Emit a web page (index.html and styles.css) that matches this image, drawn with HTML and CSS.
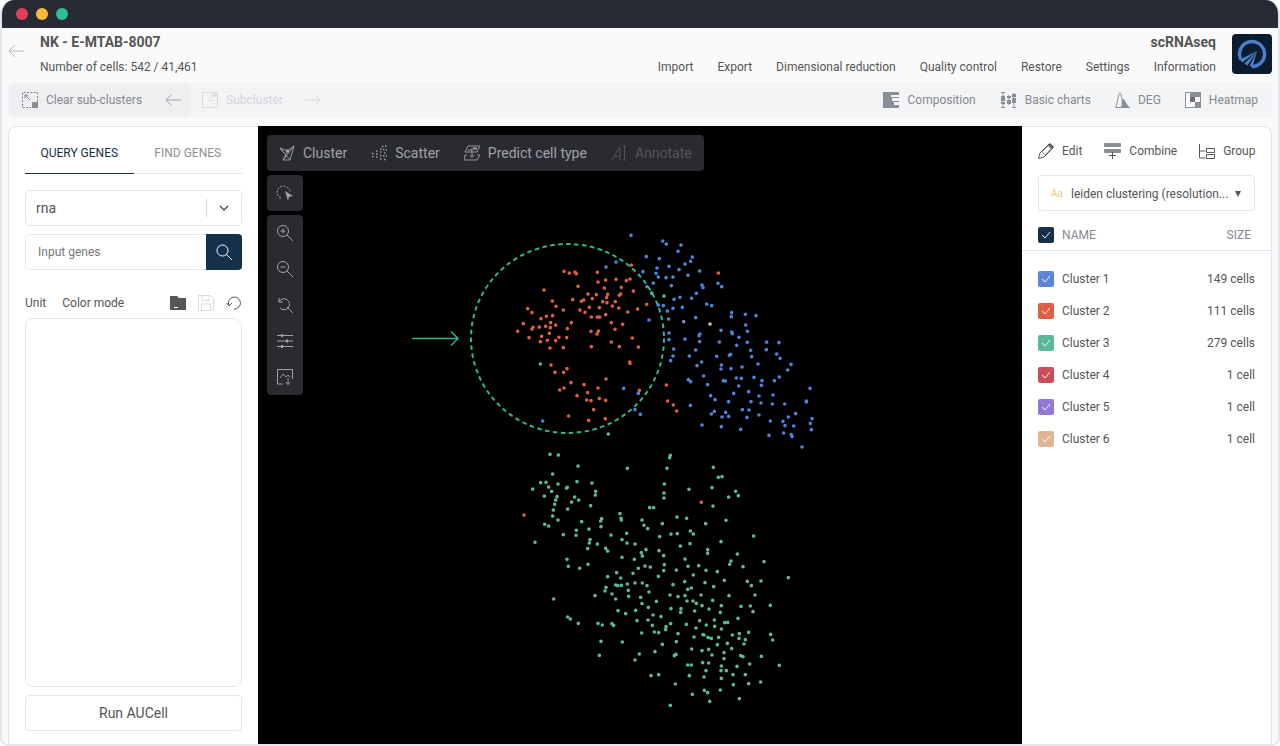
FILE: index.html
```html
<!DOCTYPE html>
<html>
<head>
    <title>NK - E-MTAB-8007</title>
    <meta charset="UTF-8">
    <link rel="stylesheet" href="styles.css">
</head>
<body>
<div class="window">
    <div class="titlebar">
        <span class="light red"></span>
        <span class="light yellow"></span>
        <span class="light green"></span>
    </div>

    <div class="header">
        <svg class="back" width="16" height="14" viewBox="0 0 16 14"><path d="M15.5 7H1M7 1 1 7l6 6" fill="none" stroke="#b4b7bc" stroke-width="1"/></svg>
        <div class="title-block">
            <div class="title">NK - E-MTAB-8007</div>
            <div class="subtitle">Number of cells: 542 / 41,461</div>
        </div>
        <div class="header-right">
            <div class="app-name">scRNAseq</div>
            <div class="nav">
                <span>Import</span>
                <span>Export</span>
                <span>Dimensional reduction</span>
                <span>Quality control</span>
                <span>Restore</span>
                <span>Settings</span>
                <span>Information</span>
            </div>
        </div>
        <div class="logo">
            <svg width="40" height="40" viewBox="0 0 40 40">
                <path d="M8.900 25.700A12.500 12.500 0 1 1 20 32.500" fill="none" stroke="#4c80cb" stroke-width="3.400"/>
                <path d="M25 17 8 25.500 10.500 28.500ZM25 17 12.500 29.500 15.500 31.500ZM25 17 17.500 32 20.500 33Z" fill="#4c80cb"/>
            </svg>
        </div>
    </div>

    <div class="toolbar">
        <div class="tool-group">
            <div class="tool tool-on">
                <svg width="16" height="16" viewBox="0 0 16 16"><path d="M.5 10V.5H15.500V10M.5 12v3.500H9" fill="none" stroke="#7d8087" stroke-dasharray="2 1.500"/><rect x="10" y="10" width="6" height="6" fill="#8a8d94"/><path d="M8 8 3 3M3 6V3h3" fill="none" stroke="#7d8087"/></svg>
                <span>Clear sub-clusters</span>
            </div>
            <div class="tool-arrow tool-on">
                <svg width="16" height="12" viewBox="0 0 16 12"><path d="M16 6H1M6.500 .5 1 6l5.500 5.500" fill="none" stroke="#a0a3a9"/></svg>
            </div>
            <div class="tool tool-off sub">
                <svg width="16" height="16" viewBox="0 0 16 16"><path d="M.5.500h15v15H.5z" fill="none" stroke="#d8dadd"/><path d="M10 0h6v5h-6zM6 5h4v1H6zM6 8h7v1H6zM10 11h3v1h-3z" fill="#dfe0e3"/></svg>
                <span>Subcluster</span>
            </div>
            <svg class="next" width="16" height="12" viewBox="0 0 16 12"><path d="M0 6h15M9.500 .5 15 6l-5.500 5.500" fill="none" stroke="#d8dadd"/></svg>
        </div>
        <div class="tool-group right">
            <div class="tool">
                <svg width="16" height="16" viewBox="0 0 16 16"><path d="M0 0h16v3H8v2h8v1H9v3h7v1h-5v3h5v3H0z" fill="#8a8e96"/></svg>
                <span>Composition</span>
            </div>
            <div class="tool">
                <svg width="17" height="16" viewBox="0 0 17 16"><path d="M3 0v16M9 3v10M14 1v15M1 .5h4M1 15.500h4M12 15.500h4" stroke="#8a8e96" fill="none"/><path d="M1 4h4v5H1zM1 10h4v2H1zM7 4h4v2H7zM7 8h4v4H7zM12 2h4v3h-4zM12 6h4v5h-4z" fill="#8a8e96"/></svg>
                <span>Basic charts</span>
            </div>
            <div class="tool">
                <svg width="15" height="16" viewBox="0 0 15 16"><path d="M.5 16C3 11 3 1 5 1s2 11 3 13" fill="none" stroke="#8a8e96"/><path d="M7 9c1-3 2-2 3 0 1 2 3 5 5 7H6z" fill="#8a8e96"/><path d="M0 15.500h15" stroke="#8a8e96"/></svg>
                <span>DEG</span>
            </div>
            <div class="tool">
                <svg width="16" height="16" viewBox="0 0 16 16"><path d="M.5.500h15v15H.5z" fill="#fff" stroke="#8a8e96"/><path d="M5 0h11v5H5zM5 5h5v5H5zM10 10h6v6h-6z" fill="#8a8e96"/><path d="M5 5h5v5H5z" fill="#6f7279"/></svg>
                <span>Heatmap</span>
            </div>
        </div>
    </div>

    <div class="main">
        <div class="panel panel-left">
            <div class="tabs">
                <div class="tab tab-active">QUERY GENES</div>
                <div class="tab">FIND GENES</div>
            </div>
            <div class="select-box">
                <span class="select-value">rna</span>
                <span class="select-sep"></span>
                <svg width="10" height="6" viewBox="0 0 10 6"><path d="M1 1l4 4 4-4" fill="none" stroke="#555" stroke-width="1.500"/></svg>
            </div>
            <div class="search-box">
                <span class="search-hint">Input genes</span>
                <div class="search-btn">
                    <svg width="16" height="16" viewBox="0 0 16 16"><circle cx="6.500" cy="6.500" r="5.500" fill="none" stroke="#fff"/><path d="M10.500 10.500 16 16" stroke="#fff"/></svg>
                </div>
            </div>
            <div class="unit-row">
                <span>Unit</span>
                <span class="color-mode">Color mode</span>
                <div class="unit-icons">
                    <svg width="16" height="14" viewBox="0 0 16 14"><path d="M0 0h7l2 2h7v12H0z" fill="#55565a"/><path d="M4 11h4v1H4z" fill="#fff"/></svg>
                    <svg width="16" height="16" viewBox="0 0 16 16"><path d="M.5.500h12l3 3v12H.5z" fill="none" stroke="#d9dbde"/><path d="M4 .5v5h7v-5M3.500 15.500V9h9v6.500" fill="none" stroke="#d9dbde"/></svg>
                    <svg width="15" height="14" viewBox="0 0 15 14"><path d="M3 9.500A6 6 0 1 1 8 13M.5 7 3 10l3-3" fill="none" stroke="#55565a"/></svg>
                </div>
            </div>
            <div class="gene-list"></div>
            <div class="run-btn">Run AUCell</div>
        </div>

        <div class="plot">
            <svg class="scatter" width="764" height="618" viewBox="258 126 764 618">
                <g transform="translate(470 230) scale(.33333)" fill="none" stroke-linecap="round" stroke-width="11">
                    <path stroke="#4f82d8" d="M483 16h0M578 33h0M589 42h0M633 45h0M624 64h0M667 81h0M662 94h0M645 102h0M529 80h0M568 86h0M597 109h0M561 114h0M627 119h0M689 123h0M558 130h0M654 136h0M565 141h0M588 143h0M609 141h0M550 159h0M604 167h0M696 165h0M699 173h0M744 160h0M755 170h0M679 190h0M665 205h0M630 202h0M612 208h0M710 222h0M725 227h0M637 232h0M609 235h0M592 243h0M580 227h0M565 225h0M596 267h0M537 270h0M677 263h0M785 248h0M784 260h0M826 253h0M858 257h0M827 285h0M832 304h0M753 301h0M785 306h0M787 311h0M807 322h0M832 337h0M748 336h0M800 346h0M842 361h0M845 380h0M890 336h0M927 338h0M889 359h0M920 372h0M930 385h0M864 402h0M963 403h0M953 420h0M597 309h0M597 329h0M645 327h0M690 312h0M687 317h0M689 335h0M611 357h0M677 360h0M609 378h0M658 378h0M602 392h0M740 379h0M782 373h0M778 376h0M695 396h0M681 407h0M754 405h0M753 417h0M783 416h0M816 411h0M701 438h0M655 449h0M662 455h0M713 464h0M799 444h0M814 445h0M760 452h0M766 453h0M852 442h0M876 452h0M874 466h0M806 468h0M913 452h0M928 441h0M836 485h0M791 490h0M722 497h0M735 509h0M867 498h0M909 495h0M776 515h0M843 515h0M873 519h0M907 522h0M944 522h0M661 526h0M1020 475h0M1009 513h0M1009 516h0M817 539h0M837 540h0M767 547h0M733 544h0M724 552h0M756 561h0M776 559h0M831 562h0M867 555h0M955 561h0M977 551h0M1026 566h0M901 573h0M939 574h0M1021 580h0M971 588h0M945 587h0M1024 599h0M696 585h0M754 590h0M812 598h0M897 616h0M941 609h0M964 614h0M966 620h0M996 651h0M408 111h0M438 96h0M519 125h0M531 170h0M461 475h0M505 490h0M495 539h0M511 553h0M218 573h0"/>
                    <path stroke="#dd5f44" d="M282 124h0M298 129h0M315 126h0M319 131h0M382 127h0M484 105h0M745 129h0M384 156h0M407 150h0M438 148h0M469 152h0M480 147h0M454 172h0M403 174h0M490 183h0M222 180h0M324 169h0M354 192h0M379 194h0M413 193h0M452 192h0M448 196h0M410 203h0M367 206h0M308 209h0M341 210h0M334 214h0M247 213h0M398 215h0M411 218h0M436 215h0M427 228h0M446 234h0M530 223h0M503 237h0M473 246h0M388 233h0M358 232h0M330 240h0M345 247h0M258 229h0M280 240h0M173 236h0M186 248h0M248 257h0M229 259h0M213 266h0M364 261h0M382 261h0M389 261h0M407 254h0M304 278h0M242 278h0M160 281h0M257 285h0M227 289h0M241 293h0M208 291h0M189 292h0M186 297h0M143 304h0M292 296h0M424 278h0M458 283h0M435 298h0M363 304h0M385 303h0M381 312h0M238 310h0M215 319h0M177 323h0M232 331h0M211 335h0M267 322h0M257 332h0M290 323h0M487 324h0M424 336h0M505 351h0M448 350h0M364 350h0M240 354h0M280 353h0M479 396h0M480 400h0M243 405h0M291 416h0M281 427h0M255 427h0M408 447h0M303 458h0M342 464h0M384 474h0M282 474h0M269 480h0M589 465h0M508 481h0M353 488h0M321 497h0M388 505h0M350 510h0M363 512h0M407 511h0M371 539h0M296 558h0M356 571h0M406 566h0M593 513h0M610 525h0M620 543h0"/>
                    <path stroke="#5cb89a" d="M211 402h0M545 189h0M582 198h0M415 612h0"/>
                    <path stroke="#8f79d4" d="M641 275h0"/>
                    <path stroke="#e0b692" d="M720 282h0"/>
                </g>
                <g transform="translate(510 445) scale(.33333)" fill="none" stroke-linecap="round" stroke-width="11">
                    <path stroke="#5cb89a" d="M120 28h0M145 30h0M204 63h0M128 87h0M92 113h0M108 112h0M144 117h0M116 126h0M125 139h0M68 132h0M103 153h0M141 155h0M137 165h0M134 178h0M130 195h0M128 213h0M144 225h0M104 238h0M116 243h0M75 292h0M160 269h0M172 127h0M170 129h0M201 110h0M246 114h0M257 139h0M256 150h0M194 156h0M206 165h0M185 171h0M173 192h0M242 182h0M215 230h0M237 252h0M199 256h0M198 271h0M240 284h0M238 294h0M262 297h0M233 311h0M287 310h0M293 318h0M275 221h0M272 228h0M273 245h0M303 270h0M330 206h0M333 220h0M334 225h0M352 70h0M471 70h0M481 31h0M479 38h0M610 67h0M625 97h0M636 95h0M463 117h0M462 144h0M462 159h0M537 133h0M606 128h0M677 139h0M685 152h0M656 156h0M609 183h0M419 188h0M431 188h0M396 225h0M402 241h0M413 251h0M457 236h0M501 216h0M530 220h0M587 236h0M648 226h0M350 265h0M336 284h0M351 294h0M375 297h0M449 275h0M483 267h0M502 266h0M541 258h0M550 267h0M633 290h0M731 273h0M511 303h0M540 296h0M408 314h0M394 323h0M397 333h0M447 317h0M461 332h0M593 314h0M593 325h0M682 327h0M336 337h0M373 343h0M525 342h0M171 343h0M175 364h0M209 370h0M234 358h0M405 363h0M421 366h0M385 370h0M463 359h0M461 377h0M499 375h0M534 364h0M566 362h0M588 376h0M622 380h0M663 348h0M659 358h0M699 365h0M762 350h0M835 398h0M320 383h0M369 385h0M293 395h0M332 399h0M445 394h0M550 390h0M712 409h0M724 422h0M753 408h0M643 406h0M585 413h0M524 410h0M489 419h0M611 425h0M352 417h0M375 414h0M397 414h0M411 422h0M317 420h0M323 422h0M334 421h0M288 427h0M285 438h0M355 436h0M417 441h0M306 447h0M255 452h0M356 454h0M392 457h0M480 450h0M504 455h0M525 452h0M544 429h0M533 433h0M573 450h0M657 452h0M735 450h0M317 462h0M131 462h0M439 469h0M396 476h0M415 487h0M531 468h0M549 468h0M559 475h0M608 466h0M576 482h0M634 482h0M693 484h0M721 483h0M781 481h0M729 500h0M324 497h0M377 496h0M347 506h0M483 491h0M513 491h0M512 502h0M554 498h0M597 492h0M631 502h0M429 510h0M453 515h0M684 520h0M173 516h0M181 522h0M205 535h0M264 535h0M277 540h0M306 536h0M311 541h0M381 527h0M414 525h0M427 541h0M468 545h0M467 554h0M482 536h0M529 538h0M569 527h0M613 525h0M644 533h0M653 532h0M589 540h0M614 544h0M558 549h0M634 552h0M395 564h0M433 561h0M446 563h0M504 566h0M552 576h0M579 569h0M582 570h0M594 577h0M604 580h0M626 577h0M667 570h0M688 566h0M716 562h0M687 580h0M706 584h0M782 568h0M788 585h0M273 589h0M337 591h0M457 598h0M499 590h0M622 599h0M652 595h0M702 597h0M545 612h0M576 617h0M596 613h0M665 611h0M435 620h0M388 627h0M493 632h0M498 628h0M606 630h0M642 623h0M642 641h0M692 632h0M699 635h0M754 634h0M268 631h0M375 645h0M533 660h0M544 660h0M578 653h0M596 654h0M634 663h0M681 664h0M719 657h0M808 661h0M588 677h0M633 677h0M649 677h0M423 692h0M446 689h0M538 692h0M582 696h0M634 700h0M669 689h0M706 689h0M496 717h0M670 719h0M716 716h0M752 711h0M583 736h0M593 743h0M631 735h0M547 748h0M599 769h0M688 761h0M481 781h0"/>
                    <path stroke="#dd5f44" d="M574 172h0M42 210h0"/>
                </g>
                <ellipse cx="567.500" cy="338.500" rx="96.500" ry="94.500" fill="none" stroke="#2cb794" stroke-width="2" stroke-dasharray="4.500 3.500"/>
                <path d="M412 338.500h46M451 331.500l7 7-7 7" fill="none" stroke="#2cb794" stroke-width="1.500"/>
            </svg>

            <div class="plot-bar">
                <div class="plot-tool">
                    <svg width="16" height="16" viewBox="0 0 16 16"><path d="M1 3 8.500 6 15 1 11 15 4 15 8.500 6M1 3 11 15M4 15 15 1M1 3 5 8" fill="none" stroke="#a0a3a8" stroke-width=".9"/><path d="M7 4.500h3v3H7z" fill="#a0a3a8"/></svg>
                    <span>Cluster</span>
                </div>
                <div class="plot-tool">
                    <svg width="16" height="16" viewBox="0 0 16 16"><path d="M11 1.500h1.500M14 1h1.500M9 4h1.500M12 4.500h1.500M15 5h1M5 6h1.500M9 7h1.500M13 8h1.500M1 8.500h1.500M5 9h1.500M1 11.500h1.500M5 12h1.500M9 10.500h1.500M12 11h1.500M15 11h1M9 14h1.500M13 14.500h1.500" stroke="#a0a3a8" stroke-width="1.600" fill="none"/></svg>
                    <span>Scatter</span>
                </div>
                <div class="plot-tool">
                    <svg width="16" height="16" viewBox="0 0 16 16"><path d="M4 1h12l-3 6H1zM3 10H1l-1 5h13l3-5h-3M8 3v9M5.500 10 8 12.500 10.500 10M4 5h4" fill="none" stroke="#a0a3a8" stroke-width=".9"/><path d="M9 2.500h4v2H9z" fill="#a0a3a8"/></svg>
                    <span>Predict cell type</span>
                </div>
                <div class="plot-tool plot-tool-off">
                    <svg width="16" height="16" viewBox="0 0 16 16"><path d="M1 15 8 3h1v12M3.500 11H9M12 1h3M12 15h3M13.500 1v14" fill="none" stroke="#55565b" stroke-width=".9"/></svg>
                    <span>Annotate</span>
                </div>
            </div>

            <div class="plot-side side-lasso">
                <svg width="18" height="18" viewBox="0 0 18 18"><path d="M5 14C1 13 0 8 2 5s6-4 9-2 3 4 3 5" fill="none" stroke="#a0a3a8" stroke-dasharray="2 1.500"/><path d="M9 7 17 12l-4 1-1 4z" fill="#a0a3a8"/></svg>
            </div>
            <div class="plot-side side-view">
                <svg width="16" height="16" viewBox="0 0 16 16"><circle cx="6" cy="6" r="5.500" fill="none" stroke="#a0a3a8"/><path d="M10 10l6 6M3.500 6h5M6 3.500v5" stroke="#a0a3a8" fill="none"/></svg>
                <svg width="16" height="16" viewBox="0 0 16 16"><circle cx="6" cy="6" r="5.500" fill="none" stroke="#a0a3a8"/><path d="M10 10l6 6M3.500 6h5" stroke="#a0a3a8" fill="none"/></svg>
                <svg width="16" height="16" viewBox="0 0 16 16"><path d="M2 1v4h4M2 5a5.500 5.500 0 1 1 1 6M10 10l6 6" stroke="#a0a3a8" fill="none"/></svg>
                <svg width="16" height="16" viewBox="0 0 16 16"><path d="M0 2.500h16M0 8h16M0 13.500h16" stroke="#a0a3a8" fill="none"/><path d="M4 1h2v3H4zM9 6.500h2v3H9zM4 12h2v3H4z" fill="#a0a3a8"/></svg>
                <svg width="16" height="16" viewBox="0 0 16 16"><path d="M6 15H.5V.5h15V10" fill="none" stroke="#a0a3a8"/><path d="M3 9l3-4 3 3 2-2 2 2M11 9v6.500M8.500 13l2.500 2.500 2.500-2.500" fill="none" stroke="#a0a3a8" stroke-width=".9"/></svg>
            </div>
        </div>

        <div class="panel panel-right">
            <div class="edit-row">
                <div class="edit-tool">
                    <svg width="16" height="16" viewBox="0 0 16 16"><path d="M.5 15.500 2 10 11 1l4 4-9 9z" fill="none" stroke="#55565a"/><path d="M10 2l2-2 4 4-2 2z" fill="#55565a"/><path d="M4 9l6-6 3 3-6 6z" fill="none" stroke="#55565a" stroke-width=".6"/></svg>
                    <span>Edit</span>
                </div>
                <div class="edit-tool">
                    <svg width="17" height="16" viewBox="0 0 17 16"><path d="M.5.500h16v3H.5zM.5 6.500h16v3H.5z" fill="#8a8d92" stroke="#55565a" stroke-width=".5"/><path d="M8.500 9v7M5 12.500h7" stroke="#55565a" fill="none"/></svg>
                    <span>Combine</span>
                </div>
                <div class="edit-tool">
                    <svg width="16" height="16" viewBox="0 0 16 16"><path d="M.5 1v14h6M.5 8h6M7.500 5.500h8v4h-8zM7.500 11.500h8v4h-8z" fill="none" stroke="#55565a"/></svg>
                    <span>Group</span>
                </div>
            </div>
            <div class="attr-select">
                <span class="attr-type">Aa</span>
                <span class="attr-name">leiden clustering (resolution...</span>
                <span class="attr-caret"></span>
            </div>
            <div class="list-head">
                <span class="check check-navy"><svg width="10" height="8" viewBox="0 0 10 8"><path d="M1 4l3 3 5-6" fill="none" stroke="#fff" stroke-width=".9"/></svg></span>
                <span class="head-name">NAME</span>
                <span class="head-size">SIZE</span>
            </div>
            <div class="cluster-list">
                <div class="cluster-row">
                    <span class="check c1"><svg width="10" height="8" viewBox="0 0 10 8"><path d="M1 4l3 3 5-6" fill="none" stroke="#fff" stroke-width=".9"/></svg></span>
                    <span class="cluster-name">Cluster 1</span>
                    <span class="cluster-size">149 cells</span>
                </div>
                <div class="cluster-row">
                    <span class="check c2"><svg width="10" height="8" viewBox="0 0 10 8"><path d="M1 4l3 3 5-6" fill="none" stroke="#fff" stroke-width=".9"/></svg></span>
                    <span class="cluster-name">Cluster 2</span>
                    <span class="cluster-size">111 cells</span>
                </div>
                <div class="cluster-row">
                    <span class="check c3"><svg width="10" height="8" viewBox="0 0 10 8"><path d="M1 4l3 3 5-6" fill="none" stroke="#fff" stroke-width=".9"/></svg></span>
                    <span class="cluster-name">Cluster 3</span>
                    <span class="cluster-size">279 cells</span>
                </div>
                <div class="cluster-row">
                    <span class="check c4"><svg width="10" height="8" viewBox="0 0 10 8"><path d="M1 4l3 3 5-6" fill="none" stroke="#fff" stroke-width=".9"/></svg></span>
                    <span class="cluster-name">Cluster 4</span>
                    <span class="cluster-size">1 cell</span>
                </div>
                <div class="cluster-row">
                    <span class="check c5"><svg width="10" height="8" viewBox="0 0 10 8"><path d="M1 4l3 3 5-6" fill="none" stroke="#fff" stroke-width=".9"/></svg></span>
                    <span class="cluster-name">Cluster 5</span>
                    <span class="cluster-size">1 cell</span>
                </div>
                <div class="cluster-row">
                    <span class="check c6"><svg width="10" height="8" viewBox="0 0 10 8"><path d="M1 4l3 3 5-6" fill="none" stroke="#fff" stroke-width=".9"/></svg></span>
                    <span class="cluster-name">Cluster 6</span>
                    <span class="cluster-size">1 cell</span>
                </div>
            </div>
        </div>
    </div>
</div>
</body>
</html>
```

FILE: styles.css
```css
* {
    box-sizing: border-box;
}

html, body {
    margin: 0;
    height: 100%;
    overflow: hidden;
    background: #fff;
}

body {
    font-family: Roboto, "Liberation Sans", sans-serif;
    font-size: 12px;
    color: #555;
}

.window {
    display: flex;
    flex-direction: column;
    height: 746px;
    background: #fafafa;
    border: 2px solid #e2e8f2;
    border-top: 0;
    border-radius: 14px 14px 8px 8px;
    overflow: hidden;
}

.titlebar {
    display: flex;
    align-items: center;
    gap: 8px;
    flex: none;
    height: 28px;
    margin: 0 -2px;
    padding-left: 16px;
    background: #282a34;
}

.light {
    width: 12px;
    height: 12px;
    border-radius: 50%;
}

.red { background: #e0415a; }
.yellow { background: #f6bb3d; }
.green { background: #2fbf98; }

.header {
    display: flex;
    flex: none;
    height: 54px;
    padding: 6px 6px 0 6px;
}

.back {
    margin-top: 10px;
}

.title-block {
    margin-left: 16px;
    flex: 1;
}

.title {
    font-size: 14px;
    font-weight: 700;
    line-height: 17px;
    margin-bottom: 8px;
}

.subtitle {
    line-height: 16px;
}

.header-right {
    display: flex;
    flex-direction: column;
    align-items: flex-end;
}

.app-name {
    font-size: 14px;
    font-weight: 700;
    line-height: 17px;
    margin-bottom: 8px;
}

.nav {
    display: flex;
    gap: 24px;
    line-height: 16px;
}

.logo {
    width: 40px;
    height: 40px;
    margin-left: 16px;
    background: #0b1c2c;
    border-radius: 4px;
}

.toolbar {
    display: flex;
    justify-content: space-between;
    flex: none;
    height: 36px;
    margin: 0 6px;
    padding: 2px 14px 2px 2px;
    background: #f3f4f6;
    border-radius: 4px;
    color: #85888f;
}

.tool-group {
    display: flex;
    align-items: center;
}

.tool-group.right {
    gap: 24px;
}

.tool {
    display: flex;
    align-items: center;
    gap: 8px;
}

.tool-on {
    height: 32px;
    background: #efeff1;
    border-radius: 4px;
}

.tool-group > .tool-on:first-child {
    padding: 0 11px 0 12px;
}

.tool-arrow {
    display: flex;
    align-items: center;
    padding: 0 9px 0 12px;
}

.tool-off {
    color: #d3d5d9;
}

.sub {
    margin-left: 12px;
}

.next {
    margin-left: 22px;
}

.main {
    display: flex;
    flex: 1;
    min-height: 0;
    margin: 8px 6px 0;
}

.panel {
    flex: none;
    width: 250px;
    background: #fff;
    border-top: 1px solid #e2e6ee;
}

.panel-left {
    display: flex;
    flex-direction: column;
    padding: 0 16px;
    border-left: 1px solid #e2e6ee;
    border-top-left-radius: 8px;
}

.tabs {
    display: flex;
    flex: none;
    height: 47px;
    margin-bottom: 16px;
    border-bottom: 1px solid #e2e6ee;
}

.tab {
    flex: 1;
    padding-top: 19px;
    text-align: center;
    line-height: 14px;
    color: #8b8f96;
    margin-bottom: -1px;
}

.tab-active {
    color: #18304a;
    border-bottom: 1px solid #18304a;
}

.select-box {
    display: flex;
    align-items: center;
    flex: none;
    height: 36px;
    padding: 0 12px 0 10px;
    border: 1px solid #e2e6ee;
    border-radius: 4px;
    font-size: 14px;
}

.select-value {
    flex: 1;
}

.select-sep {
    width: 1px;
    height: 18px;
    margin-right: 12px;
    background: #d5d7da;
}

.search-box {
    display: flex;
    align-items: center;
    flex: none;
    height: 36px;
    margin-top: 8px;
    border: 1px solid #e2e6ee;
    border-radius: 4px;
    color: #777;
}

.search-hint {
    flex: 1;
    padding-left: 12px;
}

.search-btn {
    display: flex;
    align-items: center;
    justify-content: center;
    width: 36px;
    height: 36px;
    margin: 0 -1px;
    background: #14304a;
    border-radius: 0 4px 4px 0;
}

.unit-row {
    display: flex;
    align-items: center;
    flex: none;
    height: 18px;
    margin-top: 24px;
}

.color-mode {
    margin-left: 16px;
}

.unit-icons {
    display: flex;
    align-items: center;
    gap: 12px;
    margin-left: auto;
    margin-right: 1px;
}

.gene-list {
    flex: 1;
    margin-top: 6px;
    border: 1px solid #e2e6ee;
    border-radius: 8px;
}

.run-btn {
    flex: none;
    height: 36px;
    margin: 8px 0 13px;
    border: 1px solid #e2e6ee;
    border-radius: 4px;
    font-size: 14px;
    line-height: 34px;
    text-align: center;
}

.plot {
    position: relative;
    flex: 1;
    background: #000;
}

.scatter {
    display: block;
}

.plot-bar {
    position: absolute;
    left: 9px;
    top: 9px;
    display: flex;
    align-items: center;
    gap: 24px;
    height: 36px;
    padding: 0 12px;
    background: #2a2b30;
    border-radius: 4px;
    font-size: 14px;
    color: #a0a3a8;
}

.plot-tool {
    display: flex;
    align-items: center;
    gap: 8px;
}

.plot-tool-off {
    color: #55565b;
}

.plot-side {
    position: absolute;
    left: 9px;
    display: flex;
    flex-direction: column;
    align-items: center;
    justify-content: space-around;
    width: 36px;
    background: #2a2b30;
    border-radius: 4px;
}

.side-lasso {
    top: 49px;
    height: 36px;
}

.side-view {
    top: 89px;
    height: 180px;
}

.panel-right {
    padding: 0;
    border-right: 1px solid #e2e6ee;
    border-top-right-radius: 8px;
}

.edit-row {
    display: flex;
    align-items: center;
    gap: 22px;
    height: 48px;
    padding: 0 0 1px 16px;
}

.edit-tool {
    display: flex;
    align-items: center;
    gap: 8px;
}

.attr-select {
    display: flex;
    align-items: center;
    height: 36px;
    margin: 0 16px;
    padding: 1px 13px 0 12px;
    border: 1px solid #e2e6ee;
    border-radius: 4px;
}

.attr-type {
    width: 20px;
    font-size: 10px;
    color: #efc777;
}

.attr-name {
    flex: 1;
    white-space: nowrap;
}

.attr-caret {
    width: 0;
    height: 0;
    border-left: 3.5px solid transparent;
    border-right: 3.5px solid transparent;
    border-top: 6px solid #555;
}

.list-head {
    display: flex;
    align-items: center;
    height: 40px;
    padding: 8px 20px 0 16px;
    border-bottom: 1px solid #e2e6ee;
    color: #85888f;
}

.check {
    display: flex;
    align-items: center;
    justify-content: center;
    flex: none;
    width: 16px;
    height: 16px;
    border-radius: 2px;
}

.check-navy { background: #14304a; }
.c1 { background: #5b86d8; }
.c2 { background: #dd5f44; }
.c3 { background: #5cb89a; }
.c4 { background: #cb4d57; }
.c5 { background: #9279d6; }
.c6 { background: #e0b692; }

.head-name {
    flex: 1;
    margin-left: 8px;
}

.cluster-list {
    padding: 12px 16px 0;
}

.cluster-row {
    display: flex;
    align-items: center;
    height: 32px;
}

.cluster-name {
    flex: 1;
    margin-left: 8px;
}
```
